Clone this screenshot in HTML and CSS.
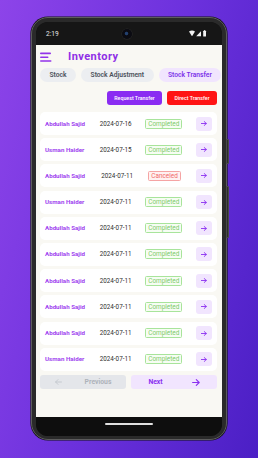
FILE: index.html
```html
<!DOCTYPE html>
<html lang="en">
<head>
<meta charset="utf-8">
<title>Inventory</title>
<link rel="stylesheet" href="styles.css">
</head>
<body>
<div class="phone">
  <span class="side-btn side-btn--power"></span>
  <span class="side-btn side-btn--volume"></span>
  <div class="screen">
    <div class="status-bar">
      <span class="time">2:19</span>
      <span class="camera"></span>
      <span class="status-icons">
        <svg width="18" height="7" viewBox="0 0 18 7">
          <path d="M0 1.6 Q3 -0.6 6 1.6 L3 6.2 Z" fill="#f2f2f2"/>
          <path d="M7.2 6.2 L12 6.2 L12 1.2 Z" fill="#f2f2f2"/>
          <rect x="14.2" y="0.8" width="2.8" height="5.6" rx="0.5" fill="#f2f2f2"/>
          <rect x="15" y="0.2" width="1.2" height="0.8" fill="#f2f2f2"/>
        </svg>
      </span>
    </div>
    <main class="app">
      <header class="app-header">
        <svg class="menu-icon" width="12" height="10" viewBox="0 0 12 10">
          <rect x="0" y="0.6" width="11" height="1.6" rx="0.8" fill="#9333ea"/>
          <rect x="0" y="4.4" width="8.5" height="1.6" rx="0.8" fill="#9333ea"/>
          <rect x="0" y="8.2" width="11.5" height="1.6" rx="0.8" fill="#9333ea"/>
        </svg>
        <h1 class="title">Inventory</h1>
      </header>
      <nav class="tabs">
        <span class="tab">Stock</span>
        <span class="tab">Stock Adjustment</span>
        <span class="tab tab--active">Stock Transfer</span>
      </nav>
      <div class="actions">
        <button class="btn btn--request">Request Transfer</button>
        <button class="btn btn--direct">Direct Transfer</button>
      </div>
      <ul class="transfers">
        <li class="transfer"><span class="name">Abdullah Sajid</span><span class="date">2024-07-16</span><span class="badge badge--ok">Completed</span><span class="go"><svg width="6" height="5" viewBox="0 0 6 5"><path d="M0.3 2.5 H5.3 M3.2 0.5 L5.3 2.5 L3.2 4.5" fill="none" stroke="#8b2ff0" stroke-width="0.9" stroke-linecap="round" stroke-linejoin="round"/></svg></span></li>
        <li class="transfer"><span class="name">Usman Haider</span><span class="date">2024-07-15</span><span class="badge badge--ok">Completed</span><span class="go"><svg width="6" height="5" viewBox="0 0 6 5"><path d="M0.3 2.5 H5.3 M3.2 0.5 L5.3 2.5 L3.2 4.5" fill="none" stroke="#8b2ff0" stroke-width="0.9" stroke-linecap="round" stroke-linejoin="round"/></svg></span></li>
        <li class="transfer"><span class="name">Abdullah Sajid</span><span class="date">2024-07-11</span><span class="badge badge--cancel">Canceled</span><span class="go"><svg width="6" height="5" viewBox="0 0 6 5"><path d="M0.3 2.5 H5.3 M3.2 0.5 L5.3 2.5 L3.2 4.5" fill="none" stroke="#8b2ff0" stroke-width="0.9" stroke-linecap="round" stroke-linejoin="round"/></svg></span></li>
        <li class="transfer"><span class="name">Usman Haider</span><span class="date">2024-07-11</span><span class="badge badge--ok">Completed</span><span class="go"><svg width="6" height="5" viewBox="0 0 6 5"><path d="M0.3 2.5 H5.3 M3.2 0.5 L5.3 2.5 L3.2 4.5" fill="none" stroke="#8b2ff0" stroke-width="0.9" stroke-linecap="round" stroke-linejoin="round"/></svg></span></li>
        <li class="transfer"><span class="name">Abdullah Sajid</span><span class="date">2024-07-11</span><span class="badge badge--ok">Completed</span><span class="go"><svg width="6" height="5" viewBox="0 0 6 5"><path d="M0.3 2.5 H5.3 M3.2 0.5 L5.3 2.5 L3.2 4.5" fill="none" stroke="#8b2ff0" stroke-width="0.9" stroke-linecap="round" stroke-linejoin="round"/></svg></span></li>
        <li class="transfer"><span class="name">Abdullah Sajid</span><span class="date">2024-07-11</span><span class="badge badge--ok">Completed</span><span class="go"><svg width="6" height="5" viewBox="0 0 6 5"><path d="M0.3 2.5 H5.3 M3.2 0.5 L5.3 2.5 L3.2 4.5" fill="none" stroke="#8b2ff0" stroke-width="0.9" stroke-linecap="round" stroke-linejoin="round"/></svg></span></li>
        <li class="transfer"><span class="name">Abdullah Sajid</span><span class="date">2024-07-11</span><span class="badge badge--ok">Completed</span><span class="go"><svg width="6" height="5" viewBox="0 0 6 5"><path d="M0.3 2.5 H5.3 M3.2 0.5 L5.3 2.5 L3.2 4.5" fill="none" stroke="#8b2ff0" stroke-width="0.9" stroke-linecap="round" stroke-linejoin="round"/></svg></span></li>
        <li class="transfer"><span class="name">Abdullah Sajid</span><span class="date">2024-07-11</span><span class="badge badge--ok">Completed</span><span class="go"><svg width="6" height="5" viewBox="0 0 6 5"><path d="M0.3 2.5 H5.3 M3.2 0.5 L5.3 2.5 L3.2 4.5" fill="none" stroke="#8b2ff0" stroke-width="0.9" stroke-linecap="round" stroke-linejoin="round"/></svg></span></li>
        <li class="transfer"><span class="name">Abdullah Sajid</span><span class="date">2024-07-11</span><span class="badge badge--ok">Completed</span><span class="go"><svg width="6" height="5" viewBox="0 0 6 5"><path d="M0.3 2.5 H5.3 M3.2 0.5 L5.3 2.5 L3.2 4.5" fill="none" stroke="#8b2ff0" stroke-width="0.9" stroke-linecap="round" stroke-linejoin="round"/></svg></span></li>
        <li class="transfer"><span class="name">Usman Haider</span><span class="date">2024-07-11</span><span class="badge badge--ok">Completed</span><span class="go"><svg width="6" height="5" viewBox="0 0 6 5"><path d="M0.3 2.5 H5.3 M3.2 0.5 L5.3 2.5 L3.2 4.5" fill="none" stroke="#8b2ff0" stroke-width="0.9" stroke-linecap="round" stroke-linejoin="round"/></svg></span></li>
      </ul>
      <div class="pager">
        <button class="page-btn page-btn--prev">
          <svg width="7" height="6" viewBox="0 0 7 6"><path d="M6.5 3 H0.6 M3 0.6 L0.6 3 L3 5.4" fill="none" stroke="#c3c7ce" stroke-width="0.9" stroke-linecap="round" stroke-linejoin="round"/></svg>
          <span>Previous</span>
        </button>
        <button class="page-btn page-btn--next">
          <span>Next</span>
          <svg width="8" height="7" viewBox="0 0 8 7"><path d="M0.6 3.5 H7.2 M4.3 0.6 L7.2 3.5 L4.3 6.4" fill="none" stroke="#8b2ff0" stroke-width="1.1" stroke-linecap="round" stroke-linejoin="round"/></svg>
        </button>
      </div>
    </main>
    <div class="nav-bar"><span class="home-indicator"></span></div>
  </div>
</div>
</body>
</html>
```

FILE: styles.css
```css
* { box-sizing: border-box; }

body {
  margin: 0;
  width: 258px;
  height: 458px;
  overflow: hidden;
  padding: 17px 0 0 31px;
  background: linear-gradient(105deg, #8d44e9 0%, #6c31dd 50%, #4b1fc5 100%);
  font-family: Roboto, "Noto Sans", sans-serif;
}

.phone {
  position: relative;
  width: 196px;
  height: 423px;
  padding: 4px 4px 3px 4px;
  background: #2a2a2a;
  border: 1px solid #5c5c5c;
  border-radius: 17px;
  box-shadow: 0 0 0 0.6px #151515;
}

.side-btn {
  position: absolute;
  right: -2.5px;
  width: 2.5px;
  background: #2d2d2d;
  border: 0.5px solid #4a4a4a;
  border-radius: 0 1px 1px 0;
}
.side-btn--power { top: 121px; height: 25px; }
.side-btn--volume { top: 168px; height: 52px; }

.screen {
  height: 100%;
  display: flex;
  flex-direction: column;
  background: #121212;
  border-radius: 12px;
  overflow: hidden;
}

.status-bar {
  height: 23px;
  flex: none;
  display: grid;
  grid-template-columns: 1fr auto 1fr;
  align-items: center;
  padding: 0 15px 0 10px;
  background: #161616;
  color: #e8e8e8;
  font-size: 6.6px;
}
.camera {
  width: 10px;
  height: 10px;
  border-radius: 50%;
  background: radial-gradient(circle at 45% 45%, #23406e 0 1.3px, #0b0b12 2.2px);
  box-shadow: 0 0 0 0.5px #2a2a2a;
}
.status-icons {
  justify-self: end;
  display: flex;
}

.app {
  flex: 1;
  display: flex;
  flex-direction: column;
  padding: 5px 5px 0 4px;
  background: #f9f8f3;
}

.app-header {
  height: 14px;
  display: flex;
  align-items: center;
  gap: 16px;
}
.menu-icon { display: block; }
.title {
  margin: 0;
  font-size: 11px;
  line-height: 14px;
  font-weight: 700;
  letter-spacing: 0.45px;
  color: #8f2fe6;
}

.tabs {
  margin-top: 4px;
  margin-right: -5px;
  height: 14px;
  display: flex;
  gap: 5px;
  white-space: nowrap;
  overflow: hidden;
}
.tab {
  flex: none;
  padding: 0 9.5px;
  border-radius: 7px;
  background: #eceef1;
  color: #4b515b;
  font-size: 6.7px;
  font-weight: 600;
  line-height: 14px;
}
.tab--active {
  background: #f1e5fe;
  color: #7d33ea;
}

.actions {
  margin-top: 9px;
  display: flex;
  justify-content: flex-end;
  gap: 5px;
}
.btn {
  height: 14px;
  padding: 0;
  border: none;
  border-radius: 3px;
  color: #fff;
  font-family: inherit;
  font-size: 5.3px;
  font-weight: 500;
}
.btn--request { width: 55px; background: #8a2cf2; }
.btn--direct { width: 50px; background: #ff1414; }

.transfers {
  list-style: none;
  margin: 7px 0 0 0;
  padding: 0;
  display: flex;
  flex-direction: column;
  gap: 3.2px;
}
.transfer {
  height: 23px;
  display: flex;
  align-items: center;
  justify-content: space-between;
  padding: 0 5px;
  background: #ffffff;
  border-radius: 5px;
}
.name {
  width: 41px;
  font-size: 6.2px;
  font-weight: 700;
  color: #a044ef;
  white-space: nowrap;
}
.date {
  font-size: 6.3px;
  color: #2f2f2f;
}
.badge {
  height: 10px;
  padding: 0 2px;
  border: 1px solid;
  border-radius: 1.5px;
  font-size: 6.4px;
  line-height: 8px;
}
.badge--ok {
  border-color: #a8e49b;
  background: #f6fdf3;
  color: #7fcb6c;
}
.badge--cancel {
  border-color: #f5a4a4;
  background: #fff1f1;
  color: #f06a6a;
}
.go {
  width: 16px;
  height: 14px;
  display: flex;
  align-items: center;
  justify-content: center;
  border-radius: 3px;
  background: #f1e5fe;
}
.go svg { display: block; }

.pager {
  margin-top: 4.5px;
  display: flex;
  gap: 5px;
}
.page-btn {
  flex: 1;
  height: 14px;
  padding: 0;
  border: none;
  border-radius: 3px;
  display: flex;
  align-items: center;
  justify-content: center;
  font-family: inherit;
  font-size: 6.8px;
  font-weight: 700;
}
.page-btn svg { display: block; }
.page-btn--prev {
  gap: 23px;
  background: #e4e6ea;
  color: #aeb3ba;
}
.page-btn--next {
  gap: 29px;
  background: #f1e5fe;
  color: #8b2ff0;
}

.nav-bar {
  height: 19px;
  flex: none;
  display: flex;
  justify-content: center;
  padding-top: 6px;
  background: #0e0e0e;
}
.home-indicator {
  width: 48px;
  height: 1.6px;
  border-radius: 1px;
  background: #e0e0e0;
}
```
